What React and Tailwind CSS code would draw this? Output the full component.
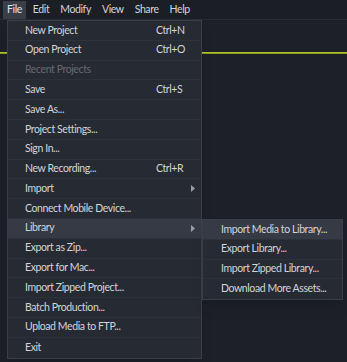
import React from "react";

const menus = ["File", "Edit", "Modify", "View", "Share", "Help"];

const fileItems = [
  { label: "New Project", shortcut: "Ctrl+N" },
  { label: "Open Project", shortcut: "Ctrl+O" },
  { label: "Recent Projects", disabled: true },
  { label: "Save", shortcut: "Ctrl+S" },
  { label: "Save As..." },
  { label: "Project Settings..." },
  { label: "Sign In..." },
  { label: "New Recording...", shortcut: "Ctrl+R" },
  { label: "Import", sub: true },
  { label: "Connect Mobile Device..." },
  { label: "Library", sub: true, active: true },
  { label: "Export as Zip..." },
  { label: "Export for Mac..." },
  { label: "Import Zipped Project..." },
  { label: "Batch Production..." },
  { label: "Upload Media to FTP..." },
  { label: "Exit" },
];

const libraryItems = [
  "Import Media to Library...",
  "Export Library...",
  "Import Zipped Library...",
  "Download More Assets...",
];

const Arrow = () => (
  <svg width="4" height="7" viewBox="0 0 4 7" className="ml-auto mr-[6px]">
    <path d="M0 0 L4 3.5 L0 7 Z" fill="#9a9ea6" />
  </svg>
);

export default function App() {
  return (
    <div
      className="relative w-[347px] h-[362px] overflow-hidden bg-[#1d2028] text-[10.5px] tracking-[-0.4px] text-[#d3d5d9] whitespace-nowrap"
      style={{ fontFamily: "Lato, 'Noto Sans', sans-serif" }}
    >
      {/* menu bar */}
      <div className="flex items-center h-[20px] pl-[3px] gap-[3px] bg-[#1b1e25] border-b border-[#2a2d35]">
        {menus.map((m) => (
          <div
            key={m}
            className={`h-[18px] px-[4px] flex items-center ${m === "File" ? "bg-[#3a3e48] text-[#e2e4e8]" : ""}`}
          >
            {m}
          </div>
        ))}
      </div>

      {/* timeline behind menu */}
      <div className="mt-[32px] h-[2px] bg-[#8b9b1f] border-t border-[#b3c42e]" />

      {/* file dropdown */}
      <div className="absolute left-[7px] top-[20px] w-[195px] bg-[#262a32] border border-[#3a3e47] shadow-lg">
        {fileItems.map((it) => (
          <div
            key={it.label}
            className={`flex items-center h-[19.8px] pl-[17px] border-b border-[#2d3139] last:border-b-0 ${
              it.active ? "bg-[#363a44]" : ""
            } ${it.disabled ? "text-[#666a73]" : ""}`}
          >
            <span>{it.label}</span>
            {it.shortcut && <span className="ml-auto w-[45px]">{it.shortcut}</span>}
            {it.sub && <Arrow />}
          </div>
        ))}
      </div>

      {/* library submenu */}
      <div className="absolute left-[202px] top-[219px] w-[141px] bg-[#262a32] border border-[#3a3e47] shadow-lg">
        {libraryItems.map((l, i) => (
          <div
            key={l}
            className={`flex items-center h-[19.8px] pl-[18px] border-b border-[#2d3139] last:border-b-0 ${
              i === 0 ? "bg-[#363a44]" : ""
            }`}
          >
            {l}
          </div>
        ))}
      </div>
    </div>
  );
}
